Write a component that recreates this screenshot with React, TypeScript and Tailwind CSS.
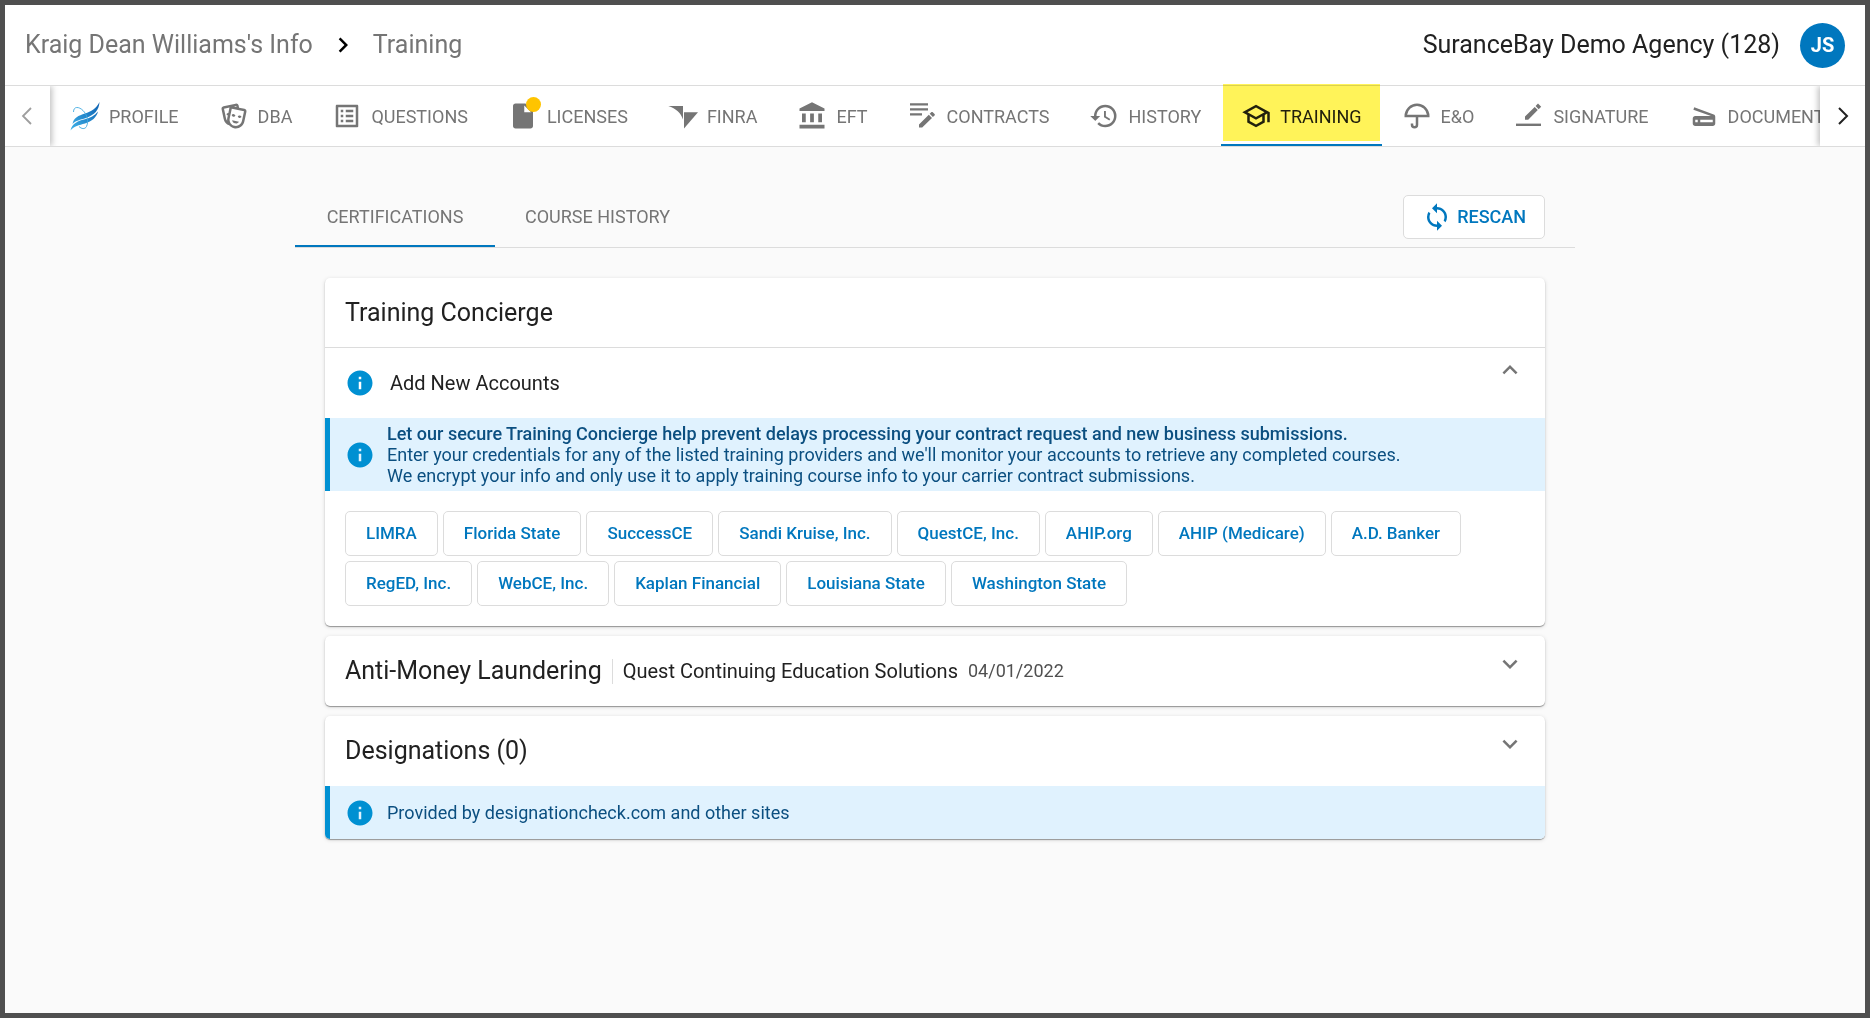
import { useState } from "react";
import clsx from "clsx";
import {
  MdAccountBalance,
  MdChevronRight,
  MdExpandLess,
  MdExpandMore,
  MdHistory,
  MdInfo,
  MdInsertDriveFile,
  MdListAlt,
  MdScanner,
  MdSync,
} from "react-icons/md";

const ProfileIcon = () => (
  <svg viewBox="0 0 30 30" width={30} height={30} fill="none">
    <defs>
      <linearGradient id="wing" x1="0" y1="30" x2="30" y2="0" gradientUnits="userSpaceOnUse">
        <stop offset="0" stopColor="#3fb4ea" />
        <stop offset="1" stopColor="#0a5cae" />
      </linearGradient>
    </defs>
    <path fill="url(#wing)" d="M29.5 1C26.500 7.500 21 10.500 15 12.500C8.500 14.500 3.500 17 2.500 23C6 19.500 10 19 16 17C24.500 14 29 9 29.500 1Z" />
    <path fill="url(#wing)" d="M28 10.500C25 14.500 20 17 14 18.500C8 20 2 22.500 0.500 29.500C4 24.800 9 24.300 15 22.500C22 20.300 26.500 16.500 28 10.500Z" />
    <path stroke="#3fa9e0" strokeWidth="0.9" d="M3.500 11C3.500 5 9 5.500 13 9.500C17 13.500 19 20 16.500 25.500C15 28.500 11.500 28 9 25.500" />
  </svg>
);

const MasksIcon = () => (
  <svg viewBox="0 0 24 24" width={30} height={30} fill="currentColor">
    <path d="M8.11,19.45C5.94,18.65 4.22,16.78 3.71,14.35L2.05,6.54C1.81,5.46 2.5,4.4 3.58,4.17L13.35,2.1L13.38,2.09C14.45,1.88 15.5,2.57 15.72,3.63L16.07,5.3L20.42,6.23H20.45C21.5,6.47 22.18,7.53 21.96,8.59L20.3,16.41C19.5,20.18 15.78,22.6 12,21.79C10.42,21.46 9.08,20.61 8.11,19.45V19.45M20,8.18L10.23,6.1L8.57,13.92V13.95C8,16.63 9.73,19.27 12.42,19.84C15.11,20.41 17.77,18.69 18.34,16L20,8.18M16,16.5C15.37,17.57 14.11,18.16 12.83,17.89C11.56,17.62 10.65,16.57 10.5,15.34L16,16.5M8.47,5.17L4,6.13L5.66,13.94L5.67,13.97C5.82,14.68 6.12,15.32 6.53,15.87C6.43,15.1 6.45,14.3 6.62,13.5L7.05,11.5C6.6,11.42 6.21,11.17 6,10.81C6.06,10.2 6.56,9.66 7.25,9.5C7.33,9.5 7.4,9.5 7.5,9.5L8.28,5.69C8.32,5.5 8.38,5.33 8.47,5.17M15.03,12.23C15.35,11.7 16.03,11.42 16.72,11.57C17.41,11.71 17.91,12.24 18,12.86C17.67,13.38 17,13.66 16.3,13.5C15.61,13.37 15.11,12.84 15.03,12.23M10.15,11.19C10.47,10.66 11.14,10.38 11.83,10.53C12.5,10.67 13.03,11.21 13.11,11.82C12.78,12.34 12.11,12.63 11.42,12.5C10.73,12.33 10.23,11.8 10.15,11.19M11.97,4.43L13.93,4.85L13.77,4.05L11.97,4.43Z" />
  </svg>
);

const LicensesIcon = () => (
  <span className="relative block">
    <MdInsertDriveFile size={30} />
    <span className="absolute -top-1 -right-[3px] size-[15px] rounded-full bg-[#ffc400]" />
  </span>
);

const FinraIcon = () => (
  <svg viewBox="0 0 30 30" width={30} height={30} fill="currentColor">
    <path d="M0.300 5H15V18.500C13 12 8 7.500 0.300 5Z" />
    <path d="M16 11.300H30L16 27.500Z" />
  </svg>
);

const ContractsIcon = () => (
  <svg viewBox="0 0 30 30" width={30} height={30} fill="currentColor">
    <path d="M2 2.200H20V4.600H2ZM2 7.200H20V9.600H2ZM2 12.200H14V14.600H2Z" />
    <path d="M11 23.500L20.800 13.700L24 16.900L14.200 26.500H11ZM21.700 12.800L23.500 11L24.500 11L26.800 13.300V14.200L24.900 16Z" />
  </svg>
);

const SchoolIcon = () => (
  <svg viewBox="0 0 24 24" width={30} height={30} fill="currentColor">
    <path d="M12 3L1 9L5 11.180V17.180L12 21L19 17.180V11.180L21 10.090V17H23V9L12 3M18.820 9L12 12.720L5.180 9L12 5.280L18.820 9M17 16L12 18.720L7 16V12.270L12 15L17 12.270V16Z" />
  </svg>
);

const UmbrellaIcon = () => (
  <svg viewBox="0 0 24 24" width={30} height={30} fill="currentColor">
    <path d="M12 2A10 10 0 0 1 22 12V13H13V19A3 3 0 0 1 7 19V18H9V19A1 1 0 0 0 11 19V13H2V12A10 10 0 0 1 12 2M12 4A8 8 0 0 0 4.100 11H19.900A8 8 0 0 0 12 4Z" />
  </svg>
);

const SignatureIcon = () => (
  <svg viewBox="0 0 30 30" width={30} height={30} fill="currentColor">
    <path d="M2 22.600H27V25H2Z" />
    <path d="M11 15.500L20.700 6L23.800 9.100L14.200 18.800H11ZM21.600 5L24 2.600L27.200 5.800L24.700 8.200Z" />
  </svg>
);

const navItems = [
  { label: "PROFILE", icon: <ProfileIcon /> },
  { label: "DBA", icon: <MasksIcon /> },
  { label: "QUESTIONS", icon: <MdListAlt size={30} /> },
  { label: "LICENSES", icon: <LicensesIcon /> },
  { label: "FINRA", icon: <FinraIcon /> },
  { label: "EFT", icon: <MdAccountBalance size={30} /> },
  { label: "CONTRACTS", icon: <ContractsIcon /> },
  { label: "HISTORY", icon: <MdHistory size={30} /> },
  { label: "TRAINING", icon: <SchoolIcon /> },
  { label: "E&O", icon: <UmbrellaIcon /> },
  { label: "SIGNATURE", icon: <SignatureIcon /> },
  { label: "DOCUMENTS", icon: <MdScanner size={30} /> },
];

const providers = [
  "LIMRA",
  "Florida State",
  "SuccessCE",
  "Sandi Kruise, Inc.",
  "QuestCE, Inc.",
  "AHIP.org",
  "AHIP (Medicare)",
  "A.D. Banker",
  "RegED, Inc.",
  "WebCE, Inc.",
  "Kaplan Financial",
  "Louisiana State",
  "Washington State",
];

const cardClass =
  "overflow-hidden rounded-[5px] bg-white shadow-[0_1px_1px_rgba(0,0,0,0.35),0_1px_4px_rgba(0,0,0,0.14)]";

function InfoBand({ children }) {
  return (
    <div className="flex items-center gap-3 border-l-5 border-[#0090d2] bg-[#e0f2fe] px-[15px] py-[5px] text-lg/[21px] text-[#0b4f80]">
      <MdInfo size={30} className="shrink-0 text-[#0090d2]" />
      <div>{children}</div>
    </div>
  );
}

export default function App() {
  const [tab, setTab] = useState("TRAINING");
  const [section, setSection] = useState("CERTIFICATIONS");

  return (
    <div className="flex min-h-screen flex-col border-5 border-[#4f4f4f] bg-[#fafafa] font-[Roboto,sans-serif] text-[#212121]">
      {/* Header */}
      <header className="flex h-[81px] items-center justify-between border-b border-[#dcdcdc] bg-white px-5">
        <div className="flex items-center gap-[15px] text-[25px] text-[#757575]">
          <a href="#info">Kraig Dean Williams's Info</a>
          <MdChevronRight size={30} className="text-black" />
          <span>Training</span>
        </div>
        <div className="flex items-center gap-5 text-[25px]">
          <span>SuranceBay Demo Agency (128)</span>
          <button className="size-[45px] rounded-full bg-[#0077be] text-xl font-bold text-white">JS</button>
        </div>
      </header>

      {/* Section navigation */}
      <nav className="flex h-[61px] border-b border-[#dcdcdc] bg-white">
        <button
          aria-label="Scroll left"
          className="z-10 flex w-[45px] shrink-0 items-center justify-center bg-white text-[#9e9e9e] shadow-[2px_0_6px_rgba(0,0,0,0.25)] [clip-path:inset(0_-10px_0_0)]"
        >
          <svg viewBox="0 0 20 20" width={20} height={20} fill="none" stroke="currentColor" strokeWidth="1.8">
            <path d="M13 2L5 10L13 18" />
          </svg>
        </button>
        <div className="flex min-w-0 flex-1 overflow-x-clip">
          {navItems.map((item) => (
            <button
              key={item.label}
              onClick={() => setTab(item.label)}
              className={clsx(
                "relative flex shrink-0 items-center gap-[9px] px-5 text-lg",
                tab === item.label ? "text-[#212121]" : "text-[#757575]"
              )}
            >
              {item.icon}
              <span className="pt-[2px]">{item.label}</span>
              {tab === item.label && (
                <>
                  <span className="absolute inset-x-[2px] -top-[2px] bottom-[5px] bg-[#fff359] mix-blend-multiply" />
                  <span className="absolute inset-x-0 bottom-0 h-[2px] bg-[#0077be]" />
                </>
              )}
            </button>
          ))}
        </div>
        <button
          aria-label="Scroll right"
          className="z-10 flex w-[45px] shrink-0 items-center justify-center bg-white text-[#212121] shadow-[-2px_0_6px_rgba(0,0,0,0.25)] [clip-path:inset(0_0_0_-10px)]"
        >
          <svg viewBox="0 0 20 20" width={20} height={20} fill="none" stroke="currentColor" strokeWidth="2">
            <path d="M6 2L14 10L6 18" />
          </svg>
        </button>
      </nav>

      <main className="mx-auto w-full max-w-[1280px] pt-[42px]">
        {/* Tabs and rescan */}
        <div className="flex h-[59px] border-b border-[#dcdcdc] pr-[30px]">
          {["CERTIFICATIONS", "COURSE HISTORY"].map((name) => (
            <button
              key={name}
              onClick={() => setSection(name)}
              className={clsx(
                "min-w-[200px] border-b-2 px-[30px] text-lg text-[#757575]",
                section === name ? "border-[#0077be]" : "border-transparent"
              )}
            >
              {name}
            </button>
          ))}
          <button className="mt-[6px] ml-auto flex h-11 items-center gap-[5px] rounded-[5px] border border-[#dcdcdc] bg-white px-[18px] text-lg font-medium text-[#0077be]">
            <MdSync size={30} />
            RESCAN
          </button>
        </div>

        <div className="flex flex-col gap-[10px] px-[30px] py-[30px]">
          <section className={cardClass}>
            <h2 className="flex h-[70px] items-center border-b border-[#dcdcdc] px-5 text-[25px]">
              Training Concierge
            </h2>
            <div className="flex h-[70px] items-center gap-[15px] px-5">
              <MdInfo size={30} className="text-[#0090d2]" />
              <h3 className="text-xl">Add New Accounts</h3>
              <button aria-label="Collapse" className="mt-[7px] ml-auto self-start text-[#757575]">
                <MdExpandLess size={30} />
              </button>
            </div>
            <InfoBand>
              <p className="font-medium">
                Let our secure Training Concierge help prevent delays processing your contract request and new business
                submissions.
              </p>
              <p>
                Enter your credentials for any of the listed training providers and we'll monitor your accounts to
                retrieve any completed courses.
              </p>
              <p>We encrypt your info and only use it to apply training course info to your carrier contract submissions.</p>
            </InfoBand>
            <div className="flex flex-wrap gap-[5px] p-5">
              {providers.map((name) => (
                <button
                  key={name}
                  className="h-[45px] rounded-[5px] border border-[#dcdcdc] bg-white px-5 text-[17px] font-medium text-[#0077be]"
                >
                  {name}
                </button>
              ))}
            </div>
          </section>

          <section className={cardClass}>
            <div className="flex h-[70px] items-center gap-[10px] px-5">
              <h2 className="text-[25px]">Anti-Money Laundering</h2>
              <span className="h-[25px] w-px bg-[#dcdcdc]" />
              <span className="text-xl">Quest Continuing Education Solutions</span>
              <span className="text-lg text-[#505050]">04/01/2022</span>
              <button aria-label="Expand" className="mt-[13px] ml-auto self-start text-[#757575]">
                <MdExpandMore size={30} />
              </button>
            </div>
          </section>

          <section className={cardClass}>
            <div className="flex h-[70px] items-center px-5">
              <h2 className="text-[25px]">Designations (0)</h2>
              <button aria-label="Expand" className="mt-[13px] ml-auto self-start text-[#757575]">
                <MdExpandMore size={30} />
              </button>
            </div>
            <InfoBand>
              <p className="py-[11px]">Provided by designationcheck.com and other sites</p>
            </InfoBand>
          </section>
        </div>
      </main>
    </div>
  );
}
